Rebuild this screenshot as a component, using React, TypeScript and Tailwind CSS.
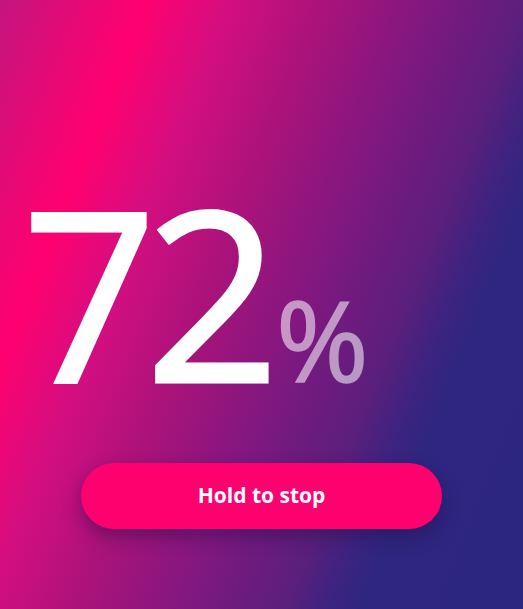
export default function App() {
  return (
    <div className="relative w-[523px] h-[609px] overflow-hidden bg-[linear-gradient(112deg,#c4157e_0%,#ff006f_19%,#d40e80_30%,#a8137a_43%,#801880_56%,#5a1f7c_69%,#3a2480_75%,#2e2680_79%,#2d2680_100%)] font-['Open_Sans',sans-serif]">
      <div className="flex flex-col">
        <div className="flex items-baseline pl-[22px] pt-[173px] h-[440px]">
          <span className="text-white text-[236px] leading-[236px] font-normal tracking-[-12px] [-webkit-text-stroke:3px_white]">72</span>
          <span className="ml-[8px] text-white opacity-55 text-[112px] leading-[112px] font-normal [-webkit-text-stroke:1.5px_white]">%</span>
        </div>
        <div className="flex justify-center pt-[23px]">
          <button className="w-[361px] h-[66px] rounded-full bg-[#ff006f] text-white text-[21px] font-bold shadow-[0_8px_18px_rgba(40,10,70,0.45)]">
            Hold to stop
          </button>
        </div>
      </div>
    </div>
  );
}
